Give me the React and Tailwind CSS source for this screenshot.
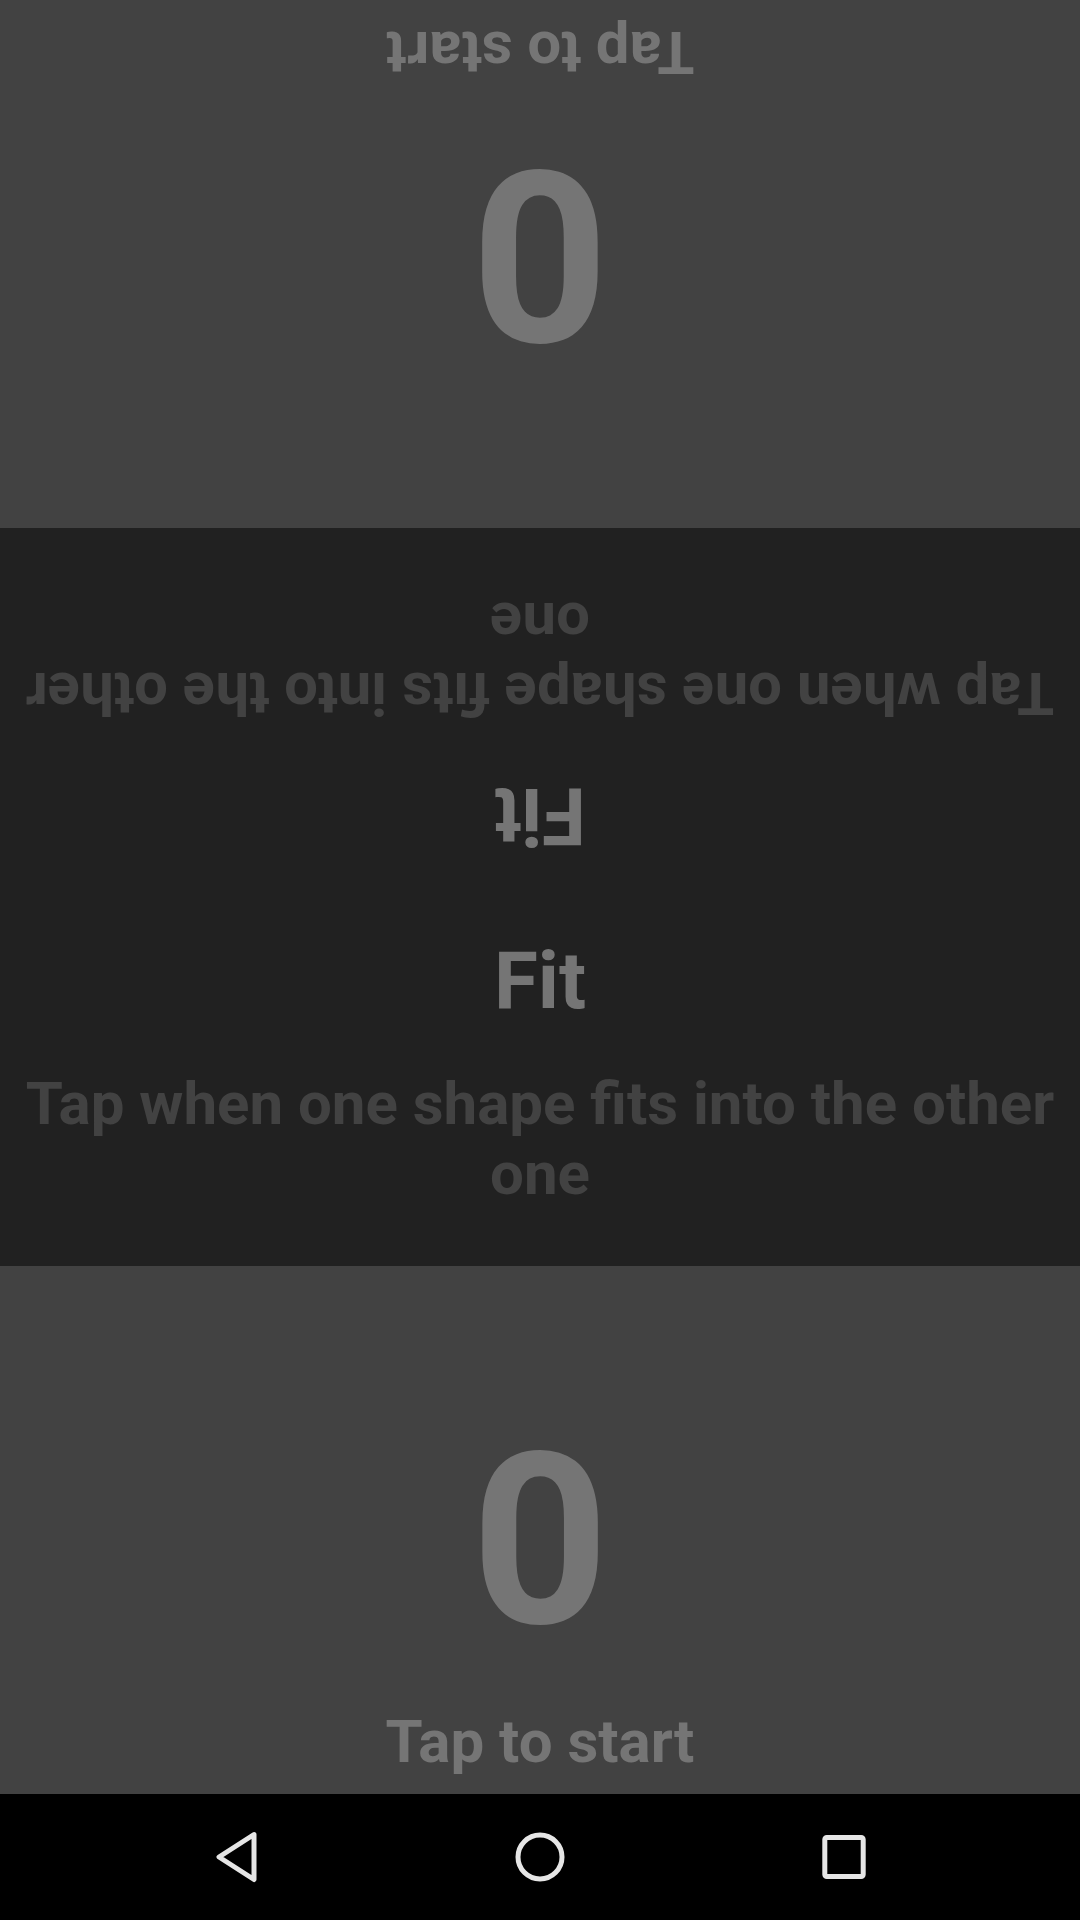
import React from "react";

function ScorePanel({ flipped }) {
  return (
    <div className={`h-[528px] w-full bg-[#424242] flex flex-col items-center ${flipped ? "rotate-180" : ""}`}>
      <div className="pt-[135px] text-[240px] leading-[281px] font-bold text-[#757575]">0</div>
      <div className="mt-[25px] text-[60px] leading-[70px] font-bold text-[#757575]">Tap to start</div>
    </div>
  );
}

function InfoHalf({ flipped }) {
  return (
    <div className={`h-[369px] w-full flex flex-col items-center ${flipped ? "rotate-180" : ""}`}>
      <div className={`${flipped ? "pt-[34px]" : "pt-[37px]"} text-[80px] leading-[94px] font-bold text-[#757575]`}>Fit</div>
      <div className="mt-[41px] w-full text-center text-[60px] leading-[70px] font-bold text-[#424242]">
        Tap when one shape fits into the other one
      </div>
    </div>
  );
}

export default function App() {
  return (
    <div className="w-[1080px] h-[1920px] flex flex-col font-['Roboto',sans-serif] overflow-hidden">
      <ScorePanel flipped />
      <div className="h-[738px] w-full bg-[#212121] flex flex-col">
        <InfoHalf flipped />
        <InfoHalf />
      </div>
      <ScorePanel />
      <div className="h-[126px] w-full bg-black flex items-center justify-center gap-[244px]">
        <svg width="60" height="60" viewBox="0 0 60 60" fill="none" stroke="#e6e6e6" strokeWidth="5" strokeLinejoin="round" strokeLinecap="round">
          <path d="M48 7.5 L13 30 L48 52.5 Z" />
        </svg>
        <svg width="60" height="60" viewBox="0 0 60 60" fill="none" stroke="#e6e6e6" strokeWidth="5">
          <circle cx="30" cy="30" r="22" />
        </svg>
        <svg width="60" height="60" viewBox="0 0 60 60" fill="none" stroke="#e6e6e6" strokeWidth="5" strokeLinejoin="round">
          <rect x="10.8" y="10.5" width="38.4" height="39" rx="2" />
        </svg>
      </div>
    </div>
  );
}
